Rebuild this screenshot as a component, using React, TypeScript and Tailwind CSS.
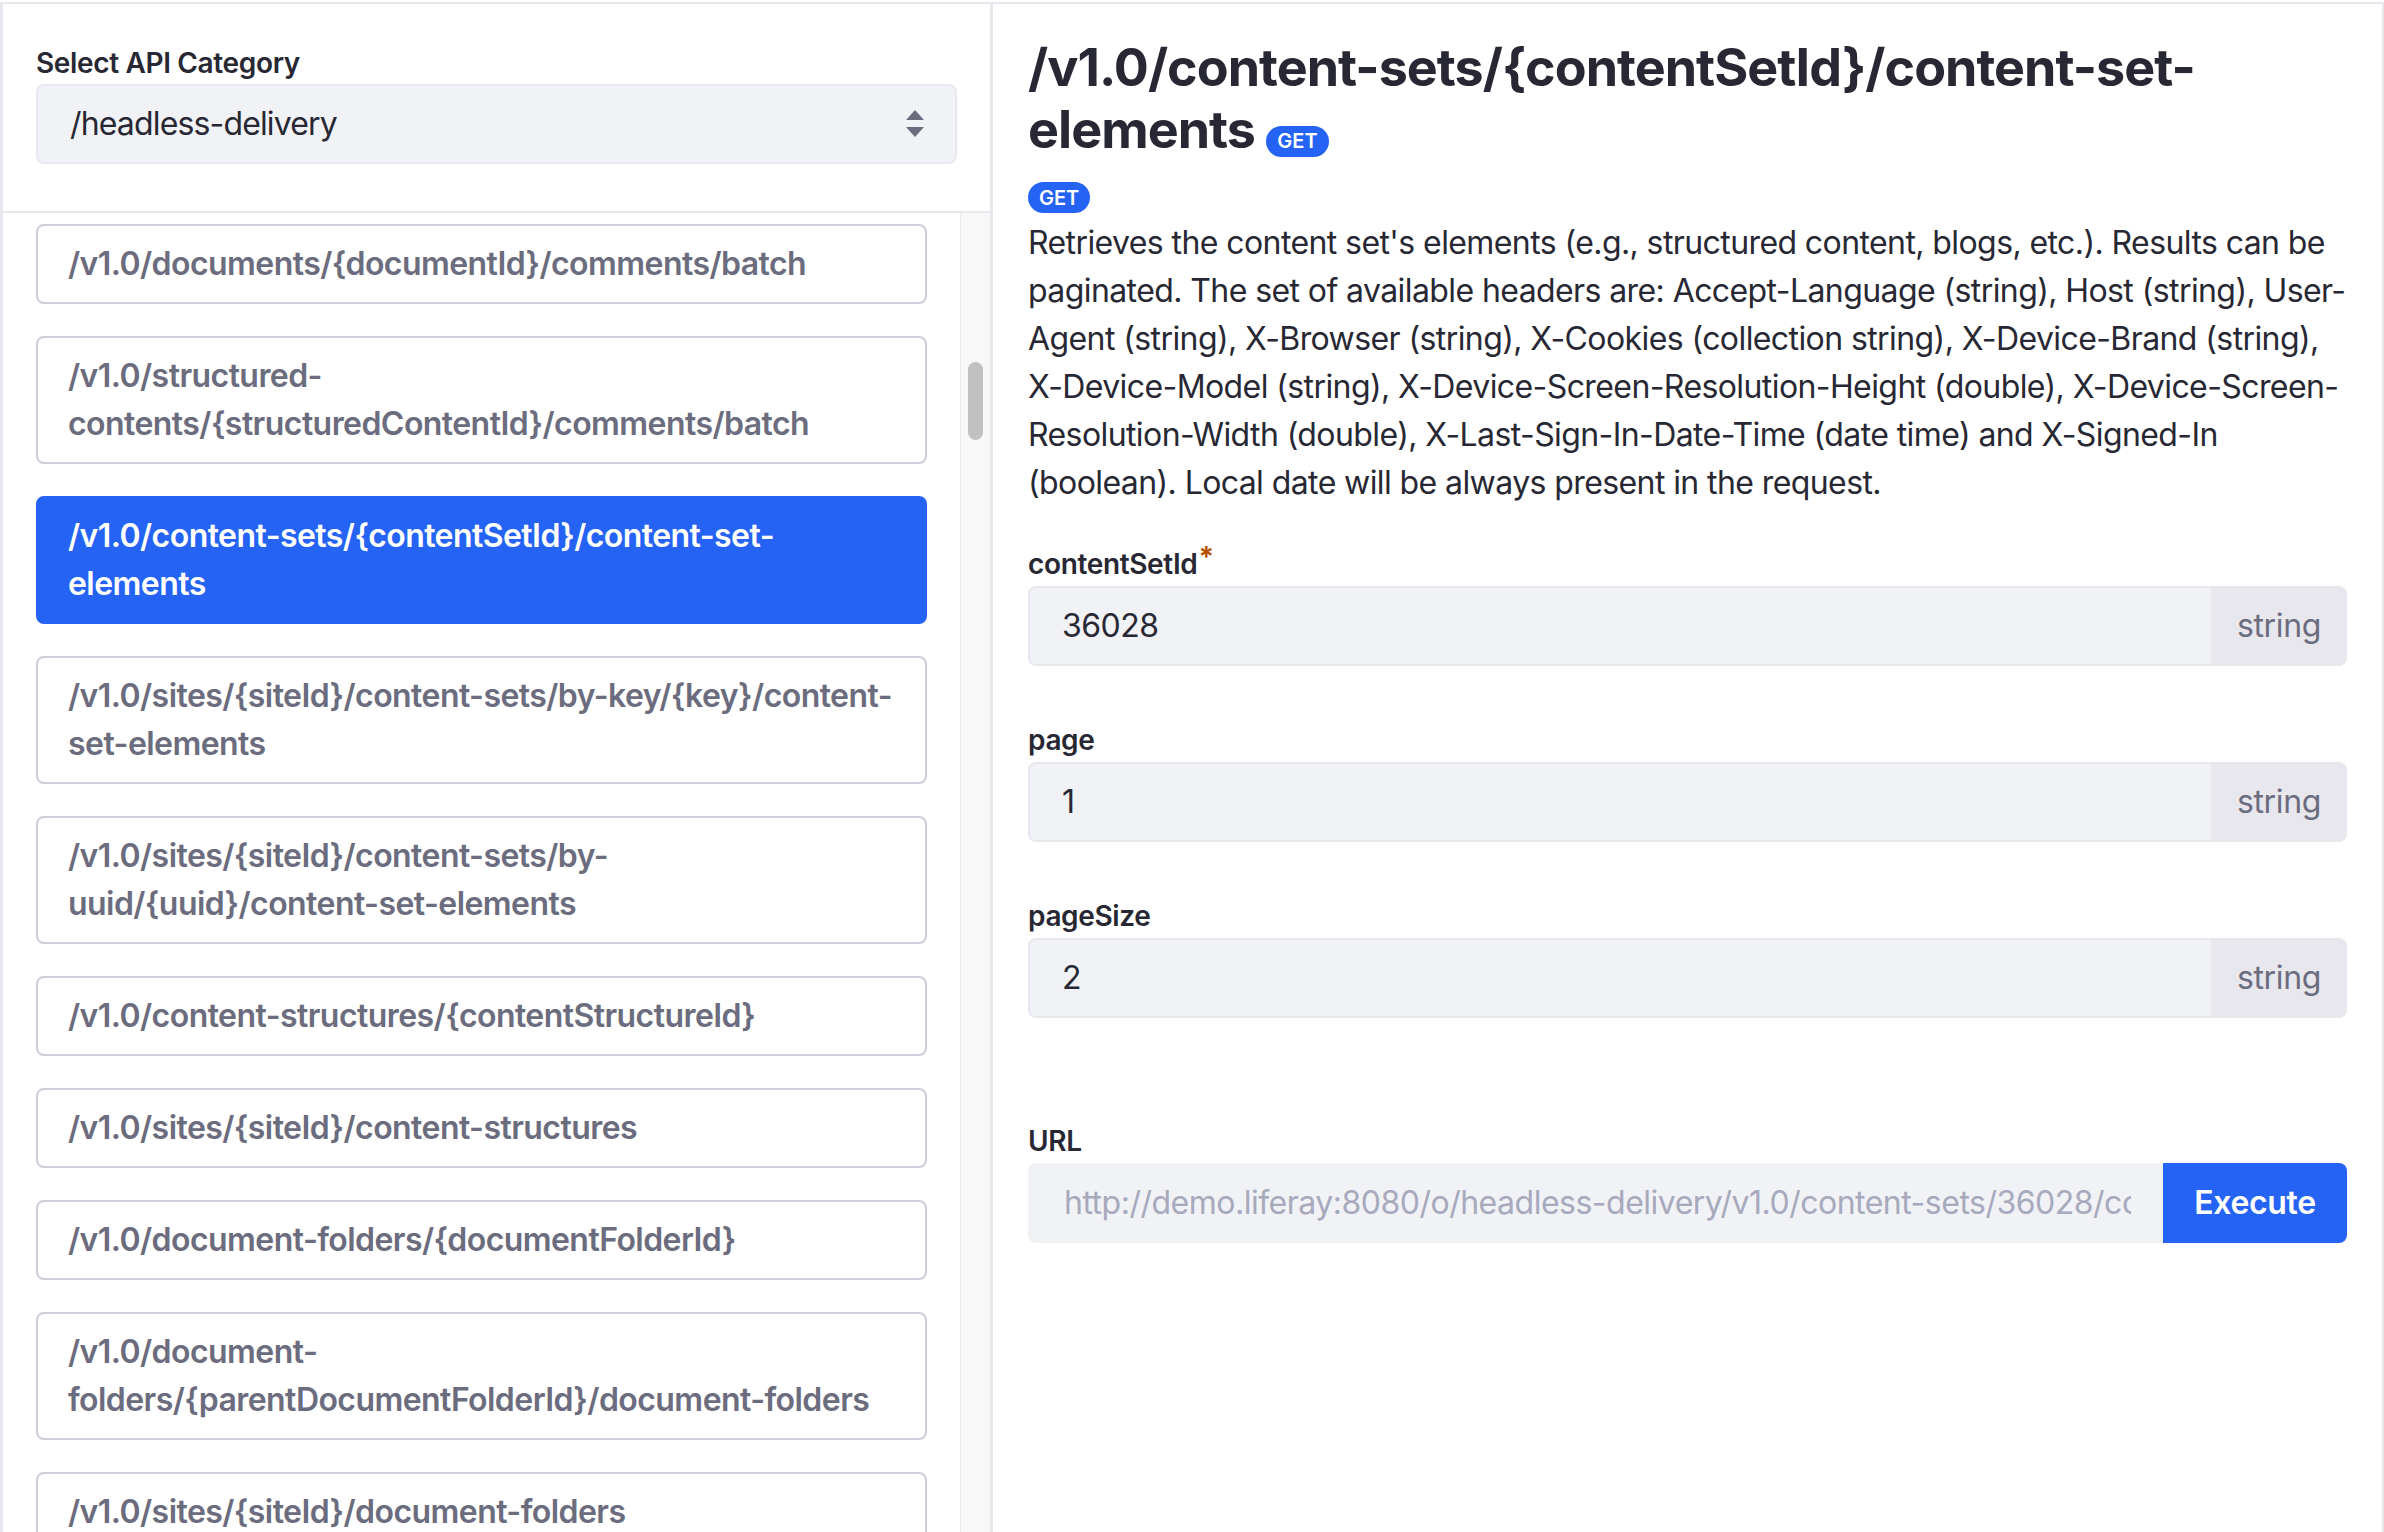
import React from 'react';

const endpoints = [
    '/v1.0/documents/{documentId}/comments/batch',
    '/v1.0/structured-contents/{structuredContentId}/comments/batch',
    '/v1.0/content-sets/{contentSetId}/content-set-elements',
    '/v1.0/sites/{siteId}/content-sets/by-key/{key}/content-set-elements',
    '/v1.0/sites/{siteId}/content-sets/by-uuid/{uuid}/content-set-elements',
    '/v1.0/content-structures/{contentStructureId}',
    '/v1.0/sites/{siteId}/content-structures',
    '/v1.0/document-folders/{documentFolderId}',
    '/v1.0/document-folders/{parentDocumentFolderId}/document-folders',
    '/v1.0/sites/{siteId}/document-folders',
    '/v1.0/documents/{documentId}',
    '/v1.0/document-folders/{documentFolderId}/documents',
];

const ACTIVE = 2;

// 파라미터 입력 필드 (값 + 타입 표시)
function ParamField({ label, value, required }: { label: string; value: string; required?: boolean }) {
    return (
        <div className="mb-[53px]">
            <label className="block text-[28px] leading-[42px] font-semibold text-[#272833]">
                {label}
                {required && <span className="relative -top-[7px] ml-[1px] text-[28px] leading-none font-bold text-[#b95000]">*</span>}
            </label>
            <div className="flex h-[80px] mt-[1px]">
                <input
                    readOnly
                    value={value}
                    className="flex-1 min-w-0 bg-[#f1f2f5] border-2 border-r-0 border-[#e7e7ed] rounded-l-[8px] px-[32px] text-[32px] tracking-[-0.5px] text-[#272833] outline-none"
                />
                <div className="flex items-center bg-[#e7e7ed] rounded-r-[8px] px-[26px] text-[32px] text-[#6b6c7e]">string</div>
            </div>
        </div>
    );
}

export default function App() {
    return (
        <div className="w-[2384px] h-[1532px] overflow-hidden bg-white pt-[2px] tracking-[-0.35px] font-['Inter','Noto_Sans',sans-serif]">
            <div className="flex h-full border-t-2 border-l-[3px] border-r-2 border-[#e7e7ed]">
                {/* 왼쪽: API 목록 */}
                <aside className="w-[990px] flex flex-col border-r-[3px] border-[#e7e7ed]">
                    <div className="px-[33px] pt-[38px] pb-[47px] border-b-2 border-[#e7e7ed]">
                        <label className="block text-[28px] leading-[42px] font-semibold text-[#272833]">Select API Category</label>
                        <div className="flex items-center justify-between h-[80px] bg-[#f1f2f5] border-2 border-[#e7e7ed] rounded-[8px] pl-[32px] pr-[30px]">
                            <span className="text-[32px] tracking-[-0.85px] text-[#272833]">/headless-delivery</span>
                            <svg width="20" height="28" viewBox="0 0 20 28" fill="#6b6c7e">
                                <path d="M10 0 L19 10 L1 10 Z" />
                                <path d="M1 17 L19 17 L10 27 Z" />
                            </svg>
                        </div>
                    </div>

                    <div className="flex flex-1 min-h-0">
                        <div className="flex-1 flex flex-col gap-[32px] pl-[33px] pr-[33px] pt-[11px] overflow-hidden">
                            {endpoints.map((e, i) => (
                                <button
                                    key={e}
                                    className={`shrink-0 w-full text-left border-2 rounded-[8px] pl-[30px] pr-[26px] py-[14px] text-[32px] leading-[48px] font-semibold tracking-[-0.56px] ${
                                        i === ACTIVE
                                            ? 'bg-[#2563f5] border-[#2563f5] text-white'
                                            : 'bg-white border-[#cdced9] text-[#6b6c7e]'
                                    }`}
                                >
                                    {e}
                                </button>
                            ))}
                        </div>
                        <div className="relative w-[30px] bg-[#f8f8f8] border-l border-[#ececec]">
                            <div className="absolute left-[7px] top-[149px] w-[15px] h-[78px] rounded-full bg-[#c1c1c1]" />
                        </div>
                    </div>
                </aside>

                {/* 오른쪽: 상세 */}
                <main className="flex-1 pl-[35px] pr-[35px] pt-[33px]">
                    <h1 className="text-[52px] leading-[62px] font-bold tracking-[-0.96px] text-[#272833]">
                        /v1.0/content-sets/{'{contentSetId}'}/content-set-elements{' '}
                        <span className="inline-block px-[11px] py-[5.5px] rounded-full bg-[#2563f5] text-white text-[20px] leading-[20px] font-semibold tracking-normal">GET</span>
                    </h1>

                    <div className="mt-[21px]">
                        <span className="inline-block px-[11px] py-[5.5px] rounded-full bg-[#2563f5] text-white text-[20px] leading-[20px] font-semibold tracking-normal">GET</span>
                    </div>

                    <p className="mt-[6px] mb-[36px] text-[32px] leading-[48px] tracking-[-0.59px] text-[#272833]">
                        Retrieves the content set's elements (e.g., structured content, blogs, etc.). Results can be paginated. The set of available headers are: Accept-Language (string), Host (string), User-Agent (string), X-Browser (string), X-Cookies (collection string), X-Device-Brand (string), X-Device-Model (string), X-Device-Screen-Resolution-Height (double), X-Device-Screen-Resolution-Width (double), X-Last-Sign-In-Date-Time (date time) and X-Signed-In (boolean). Local date will be always present in the request.
                    </p>

                    <ParamField label="contentSetId" value="36028" required />
                    <ParamField label="page" value="1" />
                    <ParamField label="pageSize" value="2" />

                    <div className="mt-[102px]">
                        <label className="block text-[28px] leading-[42px] font-semibold text-[#272833]">URL</label>
                        <div className="flex h-[80px] mt-[1px]">
                            <input
                                readOnly
                                value="http://demo.liferay:8080/o/headless-delivery/v1.0/content-sets/36028/content-set-elements?page=1&pageSize=2"
                                className="flex-1 min-w-0 bg-[#f1f2f5] border-2 border-[#f1f2f5] rounded-l-[8px] pl-[34px] pr-[30px] text-[32px] tracking-[-0.5px] text-[#a7a9bc] outline-none"
                            />
                            <button className="w-[184px] bg-[#2563f5] rounded-r-[8px] text-[32px] font-semibold text-white">Execute</button>
                        </div>
                    </div>
                </main>
            </div>
        </div>
    );
}
